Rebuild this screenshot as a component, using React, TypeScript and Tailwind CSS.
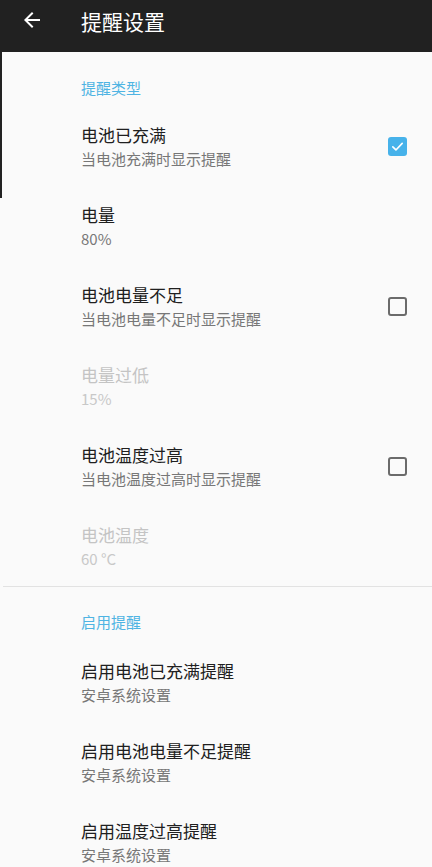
import React from "react";

type Row = {
  title: string;
  sub: string;
  check?: boolean;
  disabled?: boolean;
};

const TYPES: Row[] = [
  { title: "电池已充满", sub: "当电池充满时显示提醒", check: true },
  { title: "电量", sub: "80%" },
  { title: "电池电量不足", sub: "当电池电量不足时显示提醒", check: false },
  { title: "电量过低", sub: "15%", disabled: true },
  { title: "电池温度过高", sub: "当电池温度过高时显示提醒", check: false },
  { title: "电池温度", sub: "60 °C", disabled: true },
];

const ENABLE: Row[] = [
  { title: "启用电池已充满提醒", sub: "安卓系统设置" },
  { title: "启用电池电量不足提醒", sub: "安卓系统设置" },
  { title: "启用温度过高提醒", sub: "安卓系统设置" },
];

function CheckBox({ on }: { on: boolean }) {
  if (on) {
    return (
      <span className="flex h-[19px] w-[19px] items-center justify-center rounded-[3px] bg-[#47b2ea]">
        <svg width="15" height="15" viewBox="0 0 24 24">
          <path d="M4.5 12.5l5 5L19.5 7" fill="none" stroke="#fff" strokeWidth="2.6" strokeLinecap="round" strokeLinejoin="round" />
        </svg>
      </span>
    );
  }
  return <span className="h-[19px] w-[19px] rounded-[3px] border-2 border-[#6b6b6b]" />;
}

function Item({ row }: { row: Row }) {
  return (
    <div className="flex h-20 items-center pl-[81px] pr-[25px]">
      <div className="flex min-w-0 flex-1 flex-col">
        <span className={`text-[17px] leading-6 ${row.disabled ? "text-[#c4c4c4]" : "text-[#202020]"}`}>{row.title}</span>
        <span className={`mt-[1px] text-[15px] leading-[21px] ${row.disabled ? "text-[#c8c8c8]" : "text-[#777777]"}`}>{row.sub}</span>
      </div>
      {row.check !== undefined && <CheckBox on={row.check} />}
    </div>
  );
}

export default function App() {
  return (
    <div
      className="relative min-h-[867px] w-full overflow-hidden bg-[#fafafa]"
      style={{ fontFamily: '"Noto Sans CJK SC", "Noto Sans", sans-serif' }}
    >
      <header className="flex h-[52px] items-start bg-[#212121] pt-[7px]">
        <svg className="ml-[20px] mt-[1px]" width="24" height="24" viewBox="0 0 24 24">
          <path d="M20 11H7.83l5.59-5.59L12 4l-8 8 8 8 1.41-1.41L7.83 13H20v-2z" fill="#fff" />
        </svg>
        <h1 className="ml-[37px] text-[21px] leading-7 text-white">提醒设置</h1>
      </header>

      <div className="absolute left-0 top-[52px] h-[146px] w-[2px] bg-[#222]" />

      <div className="pl-[81px] pt-[26px] pb-2 text-[15px] leading-5 text-[#4fb4e3]">提醒类型</div>
      {TYPES.map((r) => (
        <Item key={r.title} row={r} />
      ))}

      <div className="ml-[3px] h-px bg-[#e2e2e2]" />

      <div className="pl-[81px] pt-[25px] pb-[10px] text-[15px] leading-5 text-[#4fb4e3]">启用提醒</div>
      {ENABLE.map((r) => (
        <Item key={r.title} row={r} />
      ))}
    </div>
  );
}
